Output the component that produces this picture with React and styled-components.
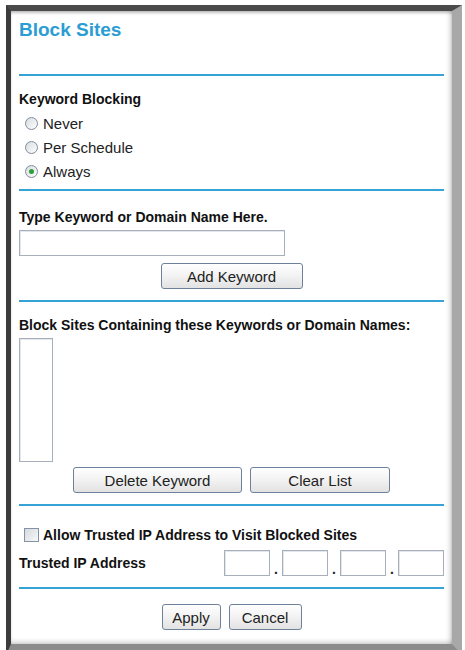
import React from "react";
import styled, { createGlobalStyle } from "styled-components";

const GlobalStyle = createGlobalStyle`
  html, body {
    margin: 0;
    padding: 0;
    background: #ffffff;
  }
  body {
    font-family: "Liberation Sans", Arial, sans-serif;
    color: #1a1a1a;
  }
`;

const Window = styled.div`
  margin: 5px 3px 0 6px;
  height: 633px;
  border-left: 5px solid #3c3c3c;
  border-top: 6px solid #4a4a4a;
  border-right: 10px solid #a8a8a8;
  border-bottom: 11px solid #8c8c8c;
  background: #fff;
  box-shadow: inset 0 3px 3px -1px rgba(0, 0, 0, 0.25),
    inset -5px 0 5px -3px rgba(0, 0, 0, 0.2),
    inset 0 -5px 5px -3px rgba(0, 0, 0, 0.2);
`;

const Content = styled.div`
  padding: 0 8px 0 8px;
`;

const Title = styled.h1`
  margin: 8px 0 0;
  font-size: 19px;
  line-height: 22px;
  font-weight: bold;
  color: #2b9dd3;
`;

const Rule = styled.div`
  height: 2px;
  margin-top: ${p => p.$top}px;
  background: #35a3d5;
`;

const Label = styled.div`
  margin-top: ${p => p.$top}px;
  font-size: 14px;
  line-height: 18px;
  font-weight: bold;
  color: #111;
`;

const RadioList = styled.div`
  margin-top: 3px;
  padding-left: 6px;
`;

const RadioRow = styled.label`
  display: flex;
  align-items: center;
  gap: 5px;
  height: 24px;
  font-size: 15px;
  color: #222;
`;

const RadioDot = styled.span`
  position: relative;
  width: 11px;
  height: 11px;
  border-radius: 50%;
  border: 1px solid #7f8c99;
  background: linear-gradient(135deg, #d8dde2, #fdfdfd);
  &::after {
    content: "";
    display: ${p => (p.$on ? "block" : "none")};
    position: absolute;
    left: 3px;
    top: 3px;
    width: 5px;
    height: 5px;
    border-radius: 50%;
    background: #2e9e3a;
  }
`;

const TextBox = styled.div`
  margin-top: ${p => p.$top}px;
  width: ${p => p.$w}px;
  height: ${p => p.$h}px;
  box-sizing: border-box;
  border: 1px solid #a7b0ba;
  box-shadow: inset 1px 1px 0 #e3e6ea;
  background: #fff;
`;

const ButtonRow = styled.div`
  display: flex;
  justify-content: center;
  gap: 8px;
  margin-top: ${p => p.$top}px;
`;

const Button = styled.button`
  width: ${p => p.$w}px;
  height: 26px;
  box-sizing: border-box;
  padding: 0;
  border: 1px solid #6e819a;
  border-radius: 3px;
  background: linear-gradient(#ffffff, #f2f2f2 50%, #e2e2e2);
  font-family: "Liberation Sans", Arial, sans-serif;
  font-size: 15px;
  color: #222;
`;

const CheckRow = styled.label`
  display: flex;
  align-items: center;
  gap: 4px;
  margin-top: 20px;
  padding-left: 5px;
  height: 18px;
  font-size: 14px;
  font-weight: bold;
  color: #111;
`;

const CheckBox = styled.span`
  width: 13px;
  height: 12px;
  border: 1px solid #8393a3;
  background: linear-gradient(135deg, #d6dbe0, #f7f8f9);
`;

const IpRow = styled.div`
  display: flex;
  align-items: center;
  justify-content: space-between;
  margin-top: 6px;
  height: 26px;
`;

const IpLabel = styled.span`
  font-size: 14px;
  font-weight: bold;
  color: #111;
`;

const IpFields = styled.div`
  display: flex;
  align-items: flex-end;
`;

const IpBox = styled.div`
  width: 46px;
  height: 26px;
  box-sizing: border-box;
  border: 1px solid #a7b0ba;
  box-shadow: inset 1px 1px 0 #e3e6ea;
`;

const IpDot = styled.span`
  width: 12px;
  text-align: center;
  font-size: 14px;
  line-height: 14px;
  font-weight: bold;
  color: #222;
`;

const radios = [
  { label: "Never", on: false },
  { label: "Per Schedule", on: false },
  { label: "Always", on: true },
];

export default function App() {
  return (
    <>
      <GlobalStyle />
      <Window>
        <Content>
          <Title>Block Sites</Title>
          <Rule $top={33} />

          <Label $top={14}>Keyword Blocking</Label>
          <RadioList>
            {radios.map(r => (
              <RadioRow key={r.label}>
                <RadioDot $on={r.on} />
                {r.label}
              </RadioRow>
            ))}
          </RadioList>
          <Rule $top={6} />

          <Label $top={17}>Type Keyword or Domain Name Here.</Label>
          <TextBox $top={4} $w={266} $h={26} />
          <ButtonRow $top={7}>
            <Button $w={142}>Add Keyword</Button>
          </ButtonRow>
          <Rule $top={11} />

          <Label $top={14}>Block Sites Containing these Keywords or Domain Names:</Label>
          <TextBox $top={4} $w={34} $h={124} />
          <ButtonRow $top={5}>
            <Button $w={169}>Delete Keyword</Button>
            <Button $w={140}>Clear List</Button>
          </ButtonRow>
          <Rule $top={11} />

          <CheckRow>
            <CheckBox />
            Allow Trusted IP Address to Visit Blocked Sites
          </CheckRow>
          <IpRow>
            <IpLabel>Trusted IP Address</IpLabel>
            <IpFields>
              <IpBox />
              <IpDot>.</IpDot>
              <IpBox />
              <IpDot>.</IpDot>
              <IpBox />
              <IpDot>.</IpDot>
              <IpBox />
            </IpFields>
          </IpRow>
          <Rule $top={11} />

          <ButtonRow $top={15}>
            <Button $w={59}>Apply</Button>
            <Button $w={73}>Cancel</Button>
          </ButtonRow>
        </Content>
      </Window>
    </>
  );
}
